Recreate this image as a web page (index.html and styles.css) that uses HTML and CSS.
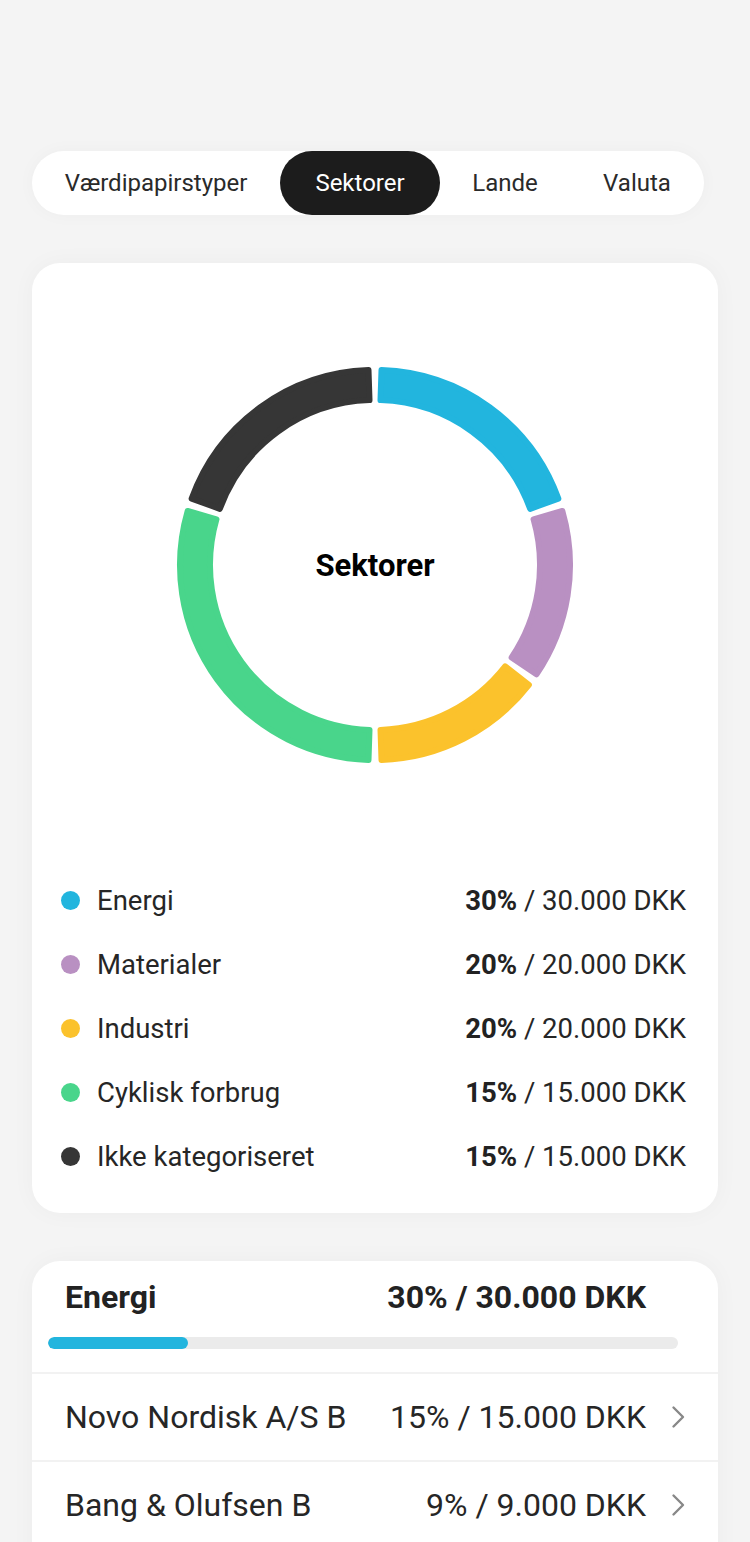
FILE: index.html
```html
<!DOCTYPE html>
<html lang="da">
<head>
<meta charset="utf-8">
<title>Sektorer</title>
<link rel="stylesheet" href="styles.css">
</head>
<body>
<div class="page">
  <nav class="tabs">
    <div class="tab tab-1">Værdipapirstyper</div>
    <div class="tab tab-2 active">Sektorer</div>
    <div class="tab tab-3">Lande</div>
    <div class="tab tab-4">Valuta</div>
  </nav>

  <section class="card chart-card">
    <div class="donut">
      <svg class="donut-svg" width="400" height="400" viewBox="0 0 400 400">
        <g stroke-width="6" stroke-linejoin="round">
          <path fill="#22b5de" stroke="#22b5de" d="M206.50 5.11 A195 195 0 0 1 383.34 133.59 L355.14 143.81 A165 165 0 0 0 205.50 35.09 Z"/>
          <path fill="#b990c2" stroke="#b990c2" d="M387.36 145.96 A195 195 0 0 1 361.49 309.30 L336.65 292.48 A165 165 0 0 0 358.54 154.27 Z"/>
          <path fill="#fbc22c" stroke="#fbc22c" d="M353.85 319.81 A195 195 0 0 1 206.50 394.89 L205.50 364.91 A165 165 0 0 0 330.18 301.38 Z"/>
          <path fill="#49d58b" stroke="#49d58b" d="M193.50 394.89 A195 195 0 0 1 12.64 145.96 L41.46 154.27 A165 165 0 0 0 194.50 364.91 Z"/>
          <path fill="#363636" stroke="#363636" d="M16.66 133.59 A195 195 0 0 1 193.50 5.11 L194.50 35.09 A165 165 0 0 0 44.86 143.81 Z"/>
        </g>
      </svg>
      <div class="donut-label">Sektorer</div>
    </div>

    <ul class="legend">
      <li class="legend-row"><span class="dot dot-blue"></span><span class="legend-name">Energi</span><span class="legend-value"><b>30%</b> / 30.000 DKK</span></li>
      <li class="legend-row"><span class="dot dot-purple"></span><span class="legend-name">Materialer</span><span class="legend-value"><b>20%</b> / 20.000 DKK</span></li>
      <li class="legend-row"><span class="dot dot-yellow"></span><span class="legend-name">Industri</span><span class="legend-value"><b>20%</b> / 20.000 DKK</span></li>
      <li class="legend-row"><span class="dot dot-green"></span><span class="legend-name">Cyklisk forbrug</span><span class="legend-value"><b>15%</b> / 15.000 DKK</span></li>
      <li class="legend-row"><span class="dot dot-dark"></span><span class="legend-name">Ikke kategoriseret</span><span class="legend-value"><b>15%</b> / 15.000 DKK</span></li>
    </ul>
  </section>

  <section class="card detail-card">
    <div class="detail-head">
      <span class="detail-title">Energi</span>
      <span class="detail-total">30% / 30.000 DKK</span>
    </div>
    <div class="bar"><div class="bar-fill" style="width: 22.2%"></div></div>
    <ul class="holdings">
      <li class="holding">
        <span class="holding-name">Novo Nordisk A/S B</span>
        <span class="holding-value">15% / 15.000 DKK</span>
        <svg class="chev" width="16" height="24" viewBox="0 0 16 24"><path d="M3.5 2.5 L13 12 L3.5 21.5" fill="none" stroke="#888888" stroke-width="2.4" stroke-linecap="round" stroke-linejoin="round"/></svg>
      </li>
      <li class="holding">
        <span class="holding-name">Bang &amp; Olufsen B</span>
        <span class="holding-value">9% / 9.000 DKK</span>
        <svg class="chev" width="16" height="24" viewBox="0 0 16 24"><path d="M3.5 2.5 L13 12 L3.5 21.5" fill="none" stroke="#888888" stroke-width="2.4" stroke-linecap="round" stroke-linejoin="round"/></svg>
      </li>
    </ul>
  </section>
</div>
</body>
</html>
```

FILE: styles.css
```css
* { box-sizing: border-box; }

html, body {
  margin: 0;
  padding: 0;
  background: #f4f4f4;
  font-family: Roboto, "Liberation Sans", Arial, sans-serif;
  color: #262626;
}

.page {
  padding: 151px 32px 0 32px;
  height: 1542px;
  overflow: hidden;
}

.tabs {
  display: flex;
  width: 672px;
  height: 64px;
  background: #ffffff;
  border-radius: 32px;
  box-shadow: 0 0 18px rgba(0, 0, 0, 0.03);
}

.tab {
  display: flex;
  align-items: center;
  justify-content: center;
  font-size: 24px;
  color: #2a2a2a;
  border-radius: 32px;
}

.tab-1 { width: 248px; }
.tab-2 { width: 160px; }
.tab-3 { width: 130px; }
.tab-4 { width: 134px; }

.tab.active {
  background: #1c1c1c;
  color: #ffffff;
}

.card {
  background: #ffffff;
  border-radius: 28px;
  width: 686px;
  box-shadow: 0 0 24px rgba(0, 0, 0, 0.035);
}

.chart-card {
  margin-top: 48px;
  padding: 102px 0 25px 0;
  height: 950px;
}

.donut {
  display: grid;
  justify-content: center;
  align-items: center;
}

.donut-svg,
.donut-label {
  grid-area: 1 / 1;
}

.donut-svg { display: block; }

.donut-label {
  justify-self: center;
  font-size: 31px;
  font-weight: 700;
  color: #000000;
}

.legend {
  list-style: none;
  margin: 103px 0 0 0;
  padding: 0 32px 0 29px;
}

.legend-row {
  display: flex;
  align-items: center;
  height: 64px;
  font-size: 27.5px;
  color: #262626;
}

.dot {
  width: 19px;
  height: 19px;
  border-radius: 50%;
  margin-right: 17px;
  flex: none;
}

.dot-blue { background: #22b5de; }
.dot-purple { background: #b990c2; }
.dot-yellow { background: #fbc22c; }
.dot-green { background: #49d58b; }
.dot-dark { background: #363636; }

.legend-name { flex: 1; }

.legend-value b { font-weight: 700; color: #222222; }

.detail-card {
  margin-top: 48px;
  padding: 18px 0 60px 0;
}

.detail-head {
  display: flex;
  justify-content: space-between;
  align-items: center;
  height: 36px;
  padding: 0 72px 0 33px;
  font-size: 32px;
  font-weight: 700;
  color: #222222;
}

.bar {
  margin: 22px 40px 0 16px;
  height: 12px;
  border-radius: 6px;
  background: #ebebeb;
  overflow: hidden;
}

.bar-fill {
  height: 100%;
  background: #22b5de;
  border-radius: 6px;
}

.holdings {
  list-style: none;
  margin: 23px 0 0 0;
  padding: 0;
}

.holding {
  display: flex;
  align-items: center;
  height: 88px;
  padding: 0 32px 0 33px;
  border-top: 2px solid #f2f2f2;
  font-size: 32px;
  color: #262626;
}

.holding-name { flex: 1; }

.chev {
  display: block;
  margin-left: 24px;
  flex: none;
}
```
